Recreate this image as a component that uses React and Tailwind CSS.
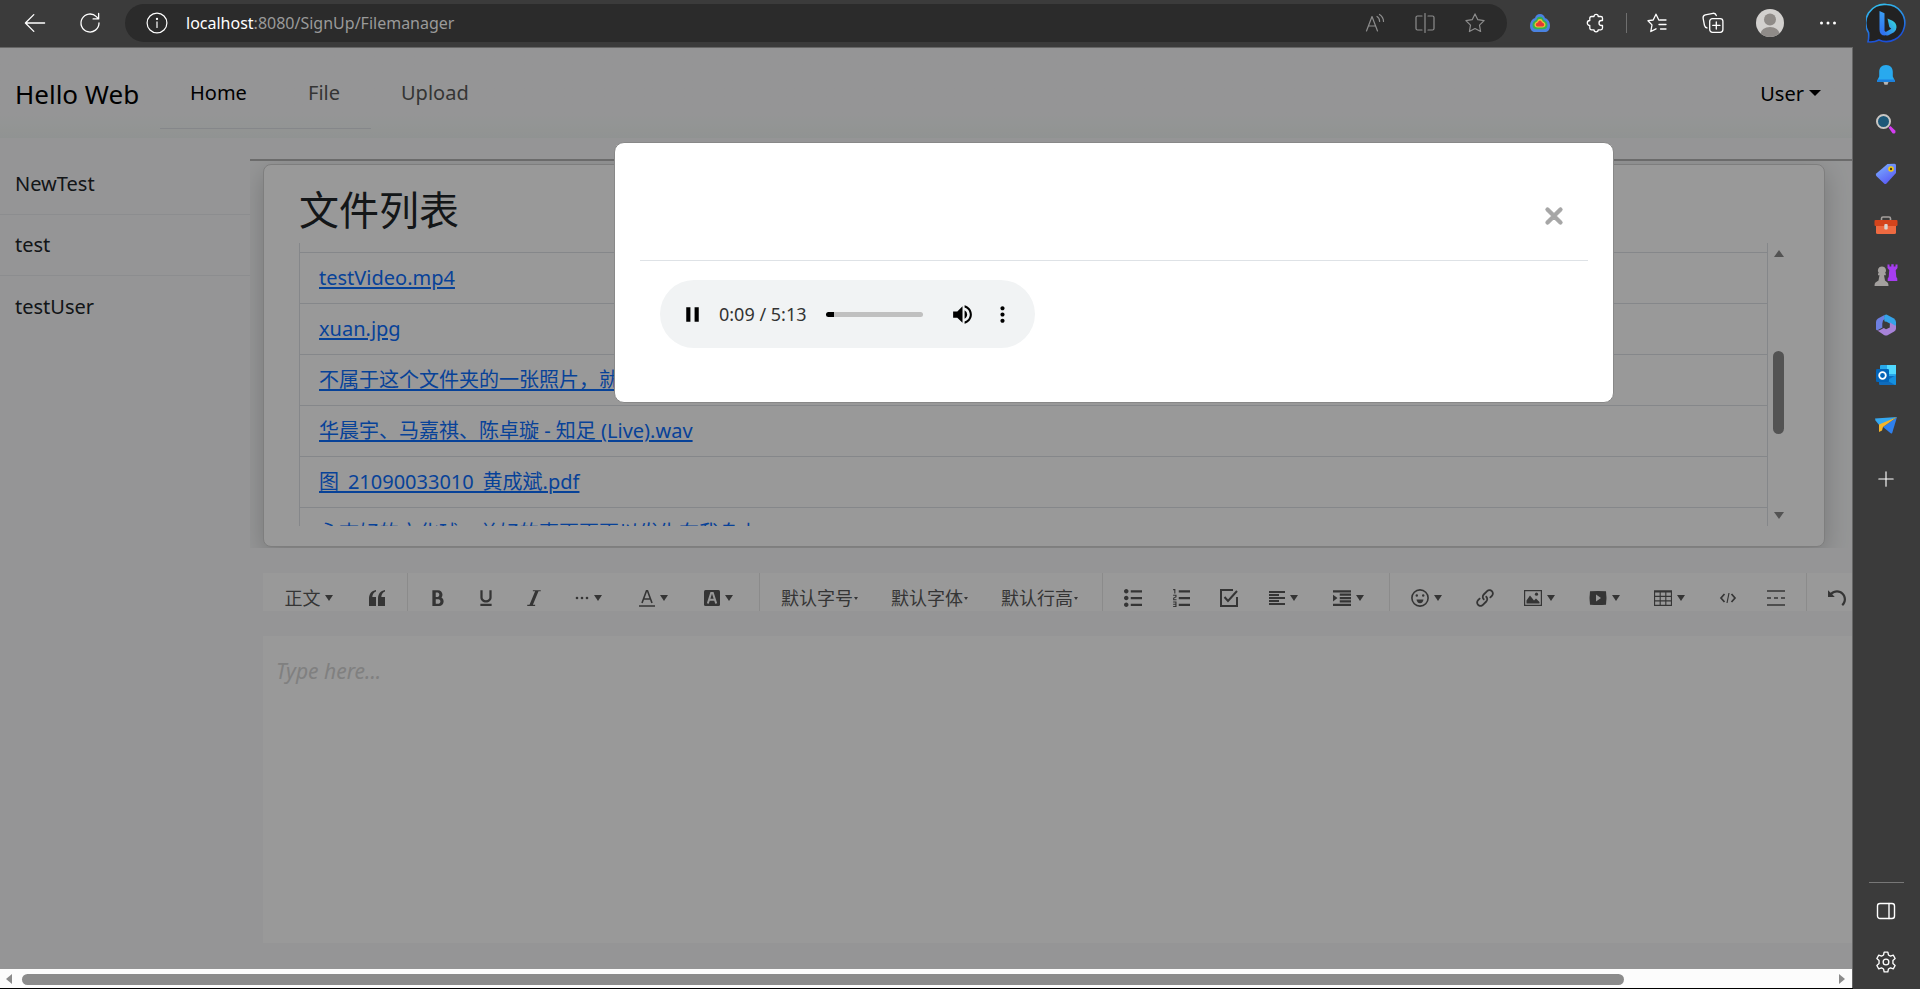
import {
  ImBold, ImUnderline, ImItalic, ImList2, ImListNumbered, ImParagraphLeft,
  ImIndentIncrease, ImLink, ImTable2, ImUndo,
} from 'react-icons/im';
import { FaXmark } from 'react-icons/fa6';
import { MdPause, MdVolumeUp, MdMoreVert } from 'react-icons/md';

const folders = ['NewTest', 'test', 'testUser'];

const files = [
  'testVideo.mp4',
  'xuan.jpg',
  '不属于这个文件夹的一张照片，就是测试.jpg',
  '华晨宇、马嘉祺、陈卓璇 - 知足 (Live).wav',
  '图_21090033010_黄成斌.pdf',
  '永志好的文化球，单好的事更更更以发生在我身上.mp3',
];

function Line({ className = 'w-5 h-5', width = 1.2, children }) {
  return (
    <svg viewBox="0 0 20 20" className={className} fill="none" stroke="currentColor" strokeWidth={width} strokeLinecap="round" strokeLinejoin="round">
      {children}
    </svg>
  );
}

/* ---------- browser toolbar ---------- */

function BrowserButton({ label, children, className = '' }) {
  return (
    <button aria-label={label} className={`flex items-center justify-center shrink-0 h-9 ${className}`}>
      {children}
    </button>
  );
}

function BrowserBar() {
  return (
    <header className="flex items-center h-12 pb-[1px] bg-[#3b3b3b] border-b border-[#666] text-white">
      <BrowserButton label="Back" className="w-[40px] ml-[15px]">
        <Line className="w-6 h-6" width={1.1}><path d="M18 10H2.500M9 3 2 10l7 7" /></Line>
      </BrowserButton>
      <BrowserButton label="Refresh" className="w-[40px] ml-[15px]">
        <Line className="w-6 h-6" width={1.1}><path d="M17.500 10a7.500 7.500 0 1 1-2.200-5.300L17 6.400M17.200 2v4.600h-4.600" /></Line>
      </BrowserButton>
      <div className="flex items-center flex-1 h-[38px] ml-[15px] pl-[21px] pr-[7px] bg-[#2b2b2b] rounded-full">
        <Line className="w-[22px] h-[22px] shrink-0" width={1.1}>
          <circle cx="10" cy="10" r="9" />
          <path d="M10 9v5" />
          <circle cx="10" cy="6.3" r="0.5" fill="currentColor" />
        </Line>
        <p className="flex-1 ml-[18px] text-[16px] text-[#9a9a9a]">
          <span className="text-white">localhost</span>:8080/SignUp/Filemanager
        </p>
        <BrowserButton label="Read aloud" className="w-[50px] text-[#8d8d8d]">
          <Line><path d="m1.500 18 5.500-14.500L12.500 18M3.500 13h7M12 3.500c1.600 1 2.600 2.800 2.600 5M14.500 1.500c2.500 1.700 4 4 4 7" /></Line>
        </BrowserButton>
        <BrowserButton label="Split screen" className="w-[50px] text-[#8d8d8d]">
          <Line><path d="M10 .5v19M7 3H2.500Q1 3 1 4.500v11Q1 17 2.500 17H7M13 3h4.500Q19 3 19 4.500v11q0 1.500-1.500 1.500H13" /></Line>
        </BrowserButton>
        <BrowserButton label="Add to favorites" className="w-[50px] text-[#8d8d8d]">
          <Line><path d="m10 .9 2.800 5.800 6.300.9-4.600 4.500 1.100 6.400L10 15.500l-5.600 3 1.100-6.400L.9 7.600l6.300-.9Z" /></Line>
        </BrowserButton>
      </div>
      <BrowserButton label="Weather extension" className="w-[56px] ml-[5px]">
        <svg viewBox="0 0 20 20" className="w-5 h-5">
          <path d="M10 1c2.800 0 4.500 2 5 4C18 6 20 9 20 12.500c0 4.500-2.500 6.500-4.500 6.500h-11C2.500 19 0 17 0 12.500 0 9 2 6 5 5c.5-2 2.200-4 5-4Z" fill="#4a82e0" />
          <path d="M10 3.800c2 0 3.200 1.200 3.600 3 2.400 1 3.900 2.700 3.900 5.200 0 3-2 4.200-4 4.200h-7c-2 0-4-1.200-4-4.200 0-2.500 1.500-4.200 3.900-5.200.4-1.800 1.600-3 3.600-3Z" fill="#35b14f" />
          <path d="M10 6c1.500 0 2.300.8 2.600 2.200 1.900.8 2.900 1.900 2.900 3.600 0 2-1.500 2.700-3 2.700h-5c-1.500 0-3-.7-3-2.700 0-1.700 1-2.800 2.900-3.600C7.700 6.800 8.500 6 10 6Z" fill="#f4c430" />
          <path d="M10 7.500c1 0 1.600.8 1.800 1.800 1.400.4 2.400 1.200 2.400 2.400 0 1.300-1.200 1.800-2.200 1.800H8c-1 0-2.200-.5-2.200-1.800 0-1.200 1-2 2.400-2.400.2-1 .8-1.800 1.800-1.800Z" fill="#e53935" />
        </svg>
      </BrowserButton>
      <BrowserButton label="Extensions" className="w-[56px]">
        <Line width={1.300}><path d="M5.500 3.500H8a2 2 0 0 1 4.200 0h2.600q1.700 0 1.700 1.700v2.300h-1a2 2 0 0 0 0 5h1v2.600q0 1.700-1.700 1.700h-2.600a2 2 0 0 1-4.200 0H5.500q-1.700 0-1.700-1.700v-2.600a2.500 2.500 0 0 1 0-5V5.200q0-1.700 1.700-1.700Z" /></Line>
      </BrowserButton>
      <span className="w-[1px] h-5 mx-[2px] bg-[#6f6f6f]" />
      <BrowserButton label="Favorites" className="w-[56px]">
        <Line width={1.300}><path d="M13 7.200 11.800 7 9 1.200 6.200 7 1 7.700l4 4.200L3.800 18.500 9 15.800M13 7h6M12 11.500h7M13.500 16H19" /></Line>
      </BrowserButton>
      <BrowserButton label="Collections" className="w-[56px]">
        <Line className="w-[22px] h-[22px]" width={1.200}>
          <rect x="7" y="6" width="12" height="12.500" rx="2.500" />
          <path d="M13 9v6.500M9.800 12.200h6.500M4.500 14.500C3 14 2.500 13 2.200 12L1 5.500C.8 4 1.500 3 3 2.600L10 1.200c1.500-.2 2.600.6 3 2" />
        </Line>
      </BrowserButton>
      <BrowserButton label="Profile" className="w-[58px]">
        <svg viewBox="0 0 28 28" className="w-7 h-7">
          <clipPath id="face"><circle cx="14" cy="14" r="14" /></clipPath>
          <g clipPath="url(#face)">
            <rect width="28" height="28" fill="#d2d0ce" />
            <circle cx="14" cy="10.500" r="6" fill="#8f8b88" />
            <ellipse cx="14" cy="25" rx="9.500" ry="7" fill="#8f8b88" />
          </g>
        </svg>
      </BrowserButton>
      <BrowserButton label="Settings and more" className="w-[50px] ml-[4px]">
        <svg viewBox="0 0 18 18" className="w-[18px] h-[18px]" fill="currentColor">
          <circle cx="2.500" cy="9" r="1.500" /><circle cx="9" cy="9" r="1.500" /><circle cx="15.500" cy="9" r="1.500" />
        </svg>
      </BrowserButton>
    </header>
  );
}

/* ---------- edge sidebar ---------- */

function SideButton({ label, children, className = 'h-[50px]' }) {
  return (
    <button aria-label={label} className={`flex items-center justify-center w-full shrink-0 ${className}`}>
      {children}
    </button>
  );
}

function EdgeSidebar() {
  return (
    <aside className="flex flex-col items-center w-[67px] shrink-0 pr-[1px] bg-[#3b3b3b] text-white">
      <SideButton label="Bing chat" className="h-[50px] pb-[4px]">
        <svg viewBox="0 0 40 40" className="w-10 h-10">
          <defs>
            <linearGradient id="ring" x1="0" y1="0" x2="0.3" y2="1">
              <stop offset="0" stopColor="#35c8f0" />
              <stop offset="1" stopColor="#1b4fd8" />
            </linearGradient>
            <linearGradient id="bing" x1="0" y1="0" x2="0" y2="1">
              <stop offset="0" stopColor="#3aa0f5" />
              <stop offset="1" stopColor="#2f6df0" />
            </linearGradient>
            <linearGradient id="bingTail" x1="1" y1="0" x2="0" y2="1">
              <stop offset="0" stopColor="#35e0d8" />
              <stop offset="1" stopColor="#2f6df0" />
            </linearGradient>
          </defs>
          <path d="M20.500 1.500a18.500 18.500 0 1 1-7.500 35.500q-5 2.500-11 1.800 1-3 .6-9A18.500 18.500 0 0 1 20.500 1.500Z" fill="#222" stroke="url(#ring)" strokeWidth="1.600" />
          <path d="m13.500 8 5 2.300v17.500L21 30l-2 2.500q-5.500 0-5.500-6Z" fill="url(#bing)" />
          <path d="m21.500 15.500 5 2.300q4 2 4 6.500 0 3-2.500 5l-5.500 3q-4 1-5-2l7.800-4.500-2-1.800Z" fill="url(#bingTail)" />
        </svg>
      </SideButton>
      <SideButton label="Notifications">
        <svg viewBox="0 0 20 22" className="w-5 h-[22px]">
          <path d="M7.500 18h5l-1 2.800h-3Z" fill="#b9b5b2" />
          <path d="M10 1c4.500 0 6.800 3 6.800 7v4.500L19 17v.8H1V17l2.200-4.500V8c0-4 2.300-7 6.800-7Z" fill="#29a9ee" />
          <path d="M1.800 15.500h16.400l.8 1.500v.8H1V17Z" fill="#1a7fe0" />
        </svg>
      </SideButton>
      <SideButton label="Search" className="h-[48px]">
        <svg viewBox="0 0 22 22" className="w-[22px] h-[22px]">
          <path d="m13.500 14.500 2-1.500 4.700 4.500q1 1.500-.3 2.700-1.400.8-2.600-.3Z" fill="#d43df0" />
          <circle cx="8.500" cy="8.500" r="6.500" fill="#1d5878" stroke="#c9c6c3" strokeWidth="2" />
        </svg>
      </SideButton>
      <SideButton label="Shopping" className="h-[52px]">
        <svg viewBox="0 0 22 22" className="w-[22px] h-[22px]">
          <defs>
            <linearGradient id="tag" x1="0" y1="0" x2="0.600" y2="1">
              <stop offset="0" stopColor="#7db6ff" />
              <stop offset="1" stopColor="#5a5cf5" />
            </linearGradient>
          </defs>
          <path d="M12.500 1 19.500.8q1.500 0 1.500 1.500V10L11.500 20.500q-1.200 1-2.400 0L1.300 13q-1-1.200 0-2.400Z" fill="url(#tag)" />
          <circle cx="16" cy="6" r="2.800" fill="#f2c811" />
          <circle cx="16" cy="6" r="1.200" fill="#4a3c10" />
        </svg>
      </SideButton>
      <SideButton label="Tools">
        <svg viewBox="0 0 24 20" className="w-6 h-5">
          <path d="M7.500 5V3.500Q7.500 2 9 2h6q1.500 0 1.500 1.500V5" fill="none" stroke="#a5a09d" strokeWidth="1.600" />
          <rect x="2" y="8" width="20" height="11" rx="1.500" fill="#ee6a41" />
          <rect x="0.500" y="5" width="23" height="6" rx="1" fill="#d4441c" />
          <rect x="10.300" y="9" width="3.400" height="5.500" rx="1" fill="#d8d5d2" />
        </svg>
      </SideButton>
      <SideButton label="Games">
        <svg viewBox="0 0 24 24" className="w-6 h-6">
          <path d="M13.500 1.500h2v2h1.800v-2.200h2.400v2.200h1.800v-2h2V5l-1.800 2.200.6 6.800 1 1.500V18H13.700v-2.500l1-1.500.6-6.800L13.500 5Z" fill="#a63df0" />
          <path d="M8 3.500a4 4 0 0 1 3 6.700h.8v2H10l1 5.300 2.500 2q1 .8 1 3.500H.500q0-2.700 1-3.500l3-2 1-5.300H4v-2h.9A4 4 0 0 1 8 3.500Z" fill="#a3a09e" />
        </svg>
      </SideButton>
      <SideButton label="Microsoft 365">
        <svg viewBox="0 0 22 22" className="w-[22px] h-[22px]">
          <path d="M9.500 1 3 4.500Q1 5.800 1 8v7q0 1.500 1.500 1.200L7.500 13.500V8.500Q7.500 6 9.500 5Z" fill="#6d7fe0" />
          <path d="m9.500 1 2-.5 7 3.700Q21 5.800 21 8v4q-.5 1.500-2 .7L9.500 7.200q-1-3 0-6.200Z" fill="#35a3e8" />
          <path d="M21 11v3.500q0 2-1.800 3L13 21q-2 1-4 0L2 16.300q2 .5 3.500-.5l7.500-4q2-1 2-3.300l5 2.900q1 .4 1-.4Z" fill="#a782d8" />
          <path d="m11 7.500 3.800 2v4L11 15.300 7.600 13.300v-4Z" fill="#3b3b3b" />
        </svg>
      </SideButton>
      <SideButton label="Outlook">
        <svg viewBox="0 0 22 22" className="w-[22px] h-[22px]">
          <rect x="5" y="1" width="16" height="13" rx="1" fill="#28a8ea" />
          <rect x="12" y="1" width="9" height="9" fill="#50d9ff" />
          <path d="M4 12h17v8q0 1-1 1H5q-1 0-1-1Z" fill="#0f6cbd" />
          <path d="m21 11-9 5.500 8 4.500q1 0 1-1Z" fill="#1490df" />
          <rect x="1" y="5" width="13" height="13" rx="1.200" fill="#0364b8" />
          <circle cx="7.500" cy="11.500" r="3.300" fill="none" stroke="#fff" strokeWidth="1.800" />
        </svg>
      </SideButton>
      <SideButton label="Drop">
        <svg viewBox="0 0 24 20" className="w-6 h-5">
          <path d="M1 3.500 23 2 5.500 10.500 1.500 5.500Z" fill="#35a8f0" />
          <path d="M23 2 9 12l8 6.500q.8.300 1.200-.5Z" fill="#2f80ed" />
          <path d="M23 2 5 9.500V17l3-1.500L9 12Z" fill="#f5b52a" />
        </svg>
      </SideButton>
      <SideButton label="Add" className="h-[58px]">
        <Line className="w-4 h-4" width={1.400}><path d="M10 1v18M1 10h18" /></Line>
      </SideButton>
      <div className="w-[35px] h-[1px] mt-auto bg-[#777]" />
      <SideButton label="Toggle sidebar" className="h-[56px]">
        <Line className="w-5 h-5" width={1.400}><rect x="1.500" y="2.500" width="17" height="15" rx="2.500" /><path d="M13 2.500v15" /></Line>
      </SideButton>
      <SideButton label="Settings" className="h-[46px] mb-[4px]">
        <Line className="w-[22px] h-[22px]" width={1.200}>
          <path d="m8.300 1-.5 2.600-1.900 1.100-2.500-.9-1.700 3L3.700 8.600v2.800l-2 1.800 1.700 3 2.500-.9 1.900 1.100.5 2.600h3.400l.5-2.600 1.900-1.100 2.500.9 1.700-3-2-1.800V8.600l2-1.800-1.700-3-2.500.9-1.900-1.100L11.700 1Z" />
          <circle cx="10" cy="10" r="2.600" />
        </Line>
      </SideButton>
    </aside>
  );
}

/* ---------- page ---------- */

function Navbar() {
  return (
    <nav className="flex items-center h-[90px] pt-[2px] pl-[15px] pr-[31px] bg-gradient-to-b from-[#f8f9fa] from-75% to-[#f1f6f4] text-black">
      <a href="#" className="w-[124px] shrink-0 text-[26px] whitespace-nowrap">Hello Web</a>
      <ul className="flex items-center w-[211px] h-[69px] ml-[21px] pb-[2px] border-b border-[#dee2e6] text-[20px] whitespace-nowrap">
        <li className="w-[118px] shrink-0 pl-[30px]"><a href="#">Home</a></li>
        <li className="w-[93px] shrink-0 pl-[30px]"><a href="#" className="text-[#595959]">File</a></li>
        <li className="shrink-0 pl-[30px]"><a href="#" className="text-[#595959]">Upload</a></li>
      </ul>
      <button className="flex items-center gap-[5px] ml-auto text-[20px]">
        User
        <span className="mb-[3px] border-x-6 border-x-transparent border-t-6 border-t-black" />
      </button>
    </nav>
  );
}

function FolderList() {
  return (
    <ul className="w-[250px] shrink-0 pt-[16px] text-[20px] text-[#212529]">
      {folders.map((name) => (
        <li key={name} className="h-[61px] border-b border-[#e9ecef] last:border-b-0">
          <a href="#" className="flex items-center h-full px-[15px]">{name}</a>
        </li>
      ))}
    </ul>
  );
}

function FileCard() {
  return (
    <div className="h-[389px] pt-[3px] pl-[13px] pr-[27px] border-t-2 border-[#b3b3b3] overflow-hidden">
      <section className="h-[383px] pt-[14px] pl-[35px] pr-[35px] bg-white border border-[#d2d2d2] rounded-lg shadow-[0_8px_26px_rgba(0,0,0,0.2)]">
        <h1 className="h-[64px] leading-[62px] text-[40px] text-[#212529]">文件列表</h1>
        <div className="flex h-[283px] overflow-hidden">
          <ul className="flex-1 h-[400px] pt-[9px] border-x border-[#dee2e6]">
            {files.map((name) => (
              <li key={name} className="flex items-center h-[51px] pl-[19px] border-t border-[#dee2e6]">
                <a href="#" className="text-[20px] text-[#0d6efd] underline underline-offset-2 whitespace-nowrap">{name}</a>
              </li>
            ))}
          </ul>
          <div className="flex flex-col items-center w-[21px] py-[7px]">
            <span className="border-x-5 border-x-transparent border-b-7 border-b-[#8b8b8b]" />
            <span className="w-[11px] h-[83px] mt-[94px] bg-[#8b8b8b] rounded-full" />
            <span className="mt-auto border-x-5 border-x-transparent border-t-7 border-t-[#8b8b8b]" />
          </div>
        </div>
      </section>
    </div>
  );
}

function Caret() {
  return <span className="border-x-4 border-x-transparent border-t-6 border-t-current" />;
}

function Tool({ label, menu, children }) {
  return (
    <button aria-label={label} className={`flex items-center justify-center gap-[5px] shrink-0 h-full ${menu ? 'w-[65px] pr-[4px]' : 'w-[48px]'}`}>
      {children}
      {menu && <Caret />}
    </button>
  );
}

function TextTool({ children }) {
  return (
    <button className="flex items-center justify-center gap-[1px] w-[110px] pr-[3px] shrink-0 h-full text-[18px] whitespace-nowrap">
      {children}
      <span className="border-x-2 border-x-transparent border-t-3 border-t-current" />
    </button>
  );
}

function Divider() {
  return <span className="w-[1px] h-full mx-[6px] shrink-0 bg-[#e8e8e8]" />;
}

function Toolbar() {
  const icon = 'w-[18px] h-[18px]';
  return (
    <div className="h-[38px] bg-white overflow-hidden">
      <div className="flex h-[50px] pl-[3px] text-[#595959]">
        <button className="flex items-center justify-center gap-[4px] w-[87px] shrink-0 h-full pr-[2px] text-[18px]">
          正文
          <Caret />
        </button>
        <Tool label="引用">
          <svg viewBox="0 0 16 16" className="w-[16px] h-[16px]" fill="currentColor">
            <path d="M7 0v1.500C4.800 2.300 3.500 4 3.300 7H7v9H0V8.500C0 4 2.500.8 7 0ZM16 0v1.500c-2.200.8-3.500 2.500-3.700 5.500H16v9H9V8.500C9 4 11.500.8 16 0Z" />
          </svg>
        </Tool>
        <Divider />
        <Tool label="粗体"><ImBold className={icon} /></Tool>
        <Tool label="下划线"><ImUnderline className={icon} /></Tool>
        <Tool label="斜体"><ImItalic className={icon} /></Tool>
        <Tool label="更多" menu>
          <svg viewBox="0 0 14 14" className="w-[14px] h-[14px]" fill="currentColor">
            <circle cx="2" cy="7" r="1.300" /><circle cx="7" cy="7" r="1.300" /><circle cx="12" cy="7" r="1.300" />
          </svg>
        </Tool>
        <Tool label="文字颜色" menu>
          <svg viewBox="0 0 16 18" className="w-[16px] h-[18px]" fill="none" stroke="currentColor" strokeWidth="1.600">
            <path d="M3 14 7.500 1.800h1L13 14M4.500 10h7M0 17h16" />
          </svg>
        </Tool>
        <Tool label="背景色" menu>
          <svg viewBox="0 0 16 16" className="w-[16px] h-[16px]">
            <rect width="16" height="16" rx="1.500" fill="currentColor" />
            <path d="M3.800 13.500 7.200 3h1.600l3.400 10.500M5.200 9.800h5.600" fill="none" stroke="#fff" strokeWidth="2" />
          </svg>
        </Tool>
        <Divider />
        <TextTool>默认字号</TextTool>
        <TextTool>默认字体</TextTool>
        <TextTool>默认行高</TextTool>
        <Divider />
        <Tool label="无序列表"><ImList2 className={icon} /></Tool>
        <Tool label="有序列表"><ImListNumbered className={icon} /></Tool>
        <Tool label="待办">
          <svg viewBox="0 0 18 18" className={icon} fill="none" stroke="currentColor" strokeWidth="2">
            <path d="M13 1H1v16h16V8M4.500 8 8 12l9-10" />
          </svg>
        </Tool>
        <Tool label="对齐" menu><ImParagraphLeft className="w-[16px] h-[16px]" /></Tool>
        <Tool label="缩进" menu><ImIndentIncrease className={icon} /></Tool>
        <Divider />
        <Tool label="表情" menu>
          <svg viewBox="0 0 18 18" className={icon} fill="none" stroke="currentColor" strokeWidth="1.600">
            <circle cx="9" cy="9" r="8.100" />
            <path d="M5.500 10.500h7Q12 14.200 9 14.200T5.500 10.500Z" fill="currentColor" stroke="none" />
            <circle cx="5.800" cy="6.500" r="1.200" fill="currentColor" stroke="none" />
            <circle cx="12.200" cy="6.500" r="1.200" fill="currentColor" stroke="none" />
          </svg>
        </Tool>
        <Tool label="链接"><ImLink className={icon} /></Tool>
        <Tool label="图片" menu>
          <svg viewBox="0 0 18 18" className={icon} fill="currentColor">
            <path d="M0 1v16h18V1Zm1.200 1.200h15.600v13.600H1.200Z" fillRule="evenodd" />
            <path d="M2.500 14.500v-3L6 6.500l4 5 2-2 3.500 3.500v1.500Z" />
            <circle cx="12.500" cy="5.200" r="1.600" />
          </svg>
        </Tool>
        <Tool label="视频" menu>
          <svg viewBox="0 0 18 16" className="w-[18px] h-[16px]">
            <path d="M1 1.300Q9 .5 17 1.300q1 6.700 0 13.400-8 .8-16 0Q0 8 1 1.300Z" fill="currentColor" />
            <path d="M7 4.500v7L12 8Z" fill="#fff" />
          </svg>
        </Tool>
        <Tool label="表格" menu><ImTable2 className={icon} /></Tool>
        <Tool label="代码块">
          <svg viewBox="0 0 18 18" className={icon} fill="none" stroke="currentColor" strokeWidth="1.700">
            <path d="M5.500 5 2 9l3.500 4M12.500 5 16 9l-3.500 4" />
            <path d="m10 4-2 10" strokeWidth="1.200" />
          </svg>
        </Tool>
        <Tool label="分割线">
          <svg viewBox="0 0 18 18" className={icon} fill="none" stroke="currentColor" strokeWidth="1.600">
            <path d="M0 2h18M0 16h18M0 9h4M7 9h4M14 9h4" />
          </svg>
        </Tool>
        <Divider />
        <Tool label="撤销"><ImUndo className={icon} /></Tool>
      </div>
    </div>
  );
}

function HorizontalScrollbar() {
  return (
    <div className="flex items-center h-[19px] pl-[6px] pr-[7px] pt-[1px] bg-[#fcfcfc]">
      <span className="border-y-5 border-y-transparent border-r-6 border-r-[#8b8b8b]" />
      <span className="w-[1602px] h-[11px] ml-[10px] bg-[#8b8b8b] rounded-full" />
      <span className="ml-auto border-y-5 border-y-transparent border-l-6 border-l-[#8b8b8b]" />
    </div>
  );
}

function AudioPlayer() {
  return (
    <div className="flex items-center w-[375px] h-[68px] px-[20px] bg-[#f1f3f4] rounded-full text-black">
      <button aria-label="Pause"><MdPause className="w-[25px] h-[25px]" /></button>
      <span className="w-[87px] ml-[14px] text-[18px] text-[#333] whitespace-nowrap">0:09 / 5:13</span>
      <input
        type="range"
        aria-label="Position"
        min="0"
        max="313"
        defaultValue="9"
        className="appearance-none w-[97px] h-[5px] ml-[20px] rounded-full bg-[linear-gradient(to_right,#000_8%,#c0c0c0_8%)] [&::-webkit-slider-thumb]:appearance-none [&::-webkit-slider-thumb]:w-0"
      />
      <button aria-label="Mute" className="ml-[27px]"><MdVolumeUp className="w-[25px] h-[25px]" /></button>
      <button aria-label="More options" className="ml-[15px]"><MdMoreVert className="w-[25px] h-[25px]" /></button>
    </div>
  );
}

function PlayerModal() {
  return (
    <div className="absolute inset-0 flex items-start justify-center pt-[94px] pl-[376px] bg-black/40">
      <div role="dialog" aria-label="Player" className="w-[1000px] h-[261px] px-[25px] bg-white border border-[#888] rounded-[10px]">
        <div className="flex items-center justify-end h-[118px] pt-[29px] pr-[24px] border-b border-[#dee2e6]">
          <button aria-label="Close" className="text-[#a6a6a6]">
            <FaXmark className="w-[20px] h-[26px]" stroke="currentColor" strokeWidth="20" />
          </button>
        </div>
        <div className="pt-[19px] pl-[20px]">
          <AudioPlayer />
        </div>
      </div>
    </div>
  );
}

export default function App() {
  return (
    <div className="flex h-screen bg-black font-['Noto_Sans','Noto_Sans_CJK_SC',sans-serif] overflow-hidden">
      <div className="flex flex-col flex-1 min-w-0">
        <BrowserBar />
        <div className="flex flex-1 pb-[1px]">
          <div className="flex flex-col flex-1 min-w-0 border-r border-[#666]">
            <main className="relative flex-1 bg-[#f8f9fa]">
              <Navbar />
              <div className="flex">
                <FolderList />
                <div className="flex-1 min-w-0 pt-[21px]">
                  <FileCard />
                  <div className="pl-[13px] pt-[25px]">
                    <Toolbar />
                    <textarea
                      aria-label="Editor"
                      placeholder="Type here..."
                      className="block w-full h-[307px] mt-[25px] px-[13px] py-[20px] bg-white text-[21px] italic placeholder:text-[#d5d5d5] resize-none outline-none"
                    />
                  </div>
                </div>
              </div>
              <PlayerModal />
            </main>
            <HorizontalScrollbar />
          </div>
        </div>
      </div>
      <EdgeSidebar />
    </div>
  );
}
